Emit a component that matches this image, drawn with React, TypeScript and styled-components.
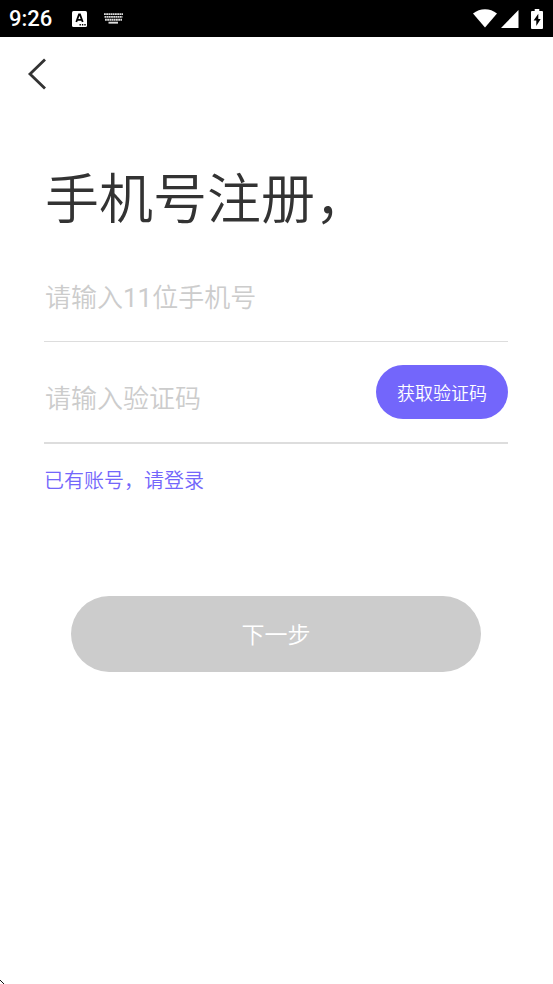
import React from 'react';
import styled, { createGlobalStyle } from 'styled-components';

const GlobalStyle = createGlobalStyle`
  * { box-sizing: border-box; }
  body {
    margin: 0;
    background: #fff;
    font-family: Roboto, "Noto Sans CJK SC DemiLight", "Noto Sans CJK SC", sans-serif;
    font-weight: 400;
  }
`;

const Screen = styled.div`
  position: relative;
  display: flex;
  flex-direction: column;
  min-height: 100vh;
  background: #fff;
`;

const StatusBar = styled.div`
  display: flex;
  align-items: center;
  justify-content: space-between;
  height: 37px;
  padding: 0 10px 0 9px;
  background: #000;
  color: #fff;
`;

const StatusGroup = styled.div<{ $gap: number }>`
  display: flex;
  align-items: center;
  gap: ${({ $gap }) => $gap}px;

  svg { display: block; }
`;

const Clock = styled.time`
  margin-right: 4px;
  font-size: 22px;
  font-weight: 500;
  line-height: 37px;
`;

const NavBar = styled.header`
  display: flex;
  align-items: center;
  height: 74px;
  padding: 0 20px;
`;

const BackButton = styled.button`
  display: flex;
  padding: 4px;
  border: 0;
  background: none;
  cursor: pointer;
`;

const Content = styled.main`
  display: flex;
  flex-direction: column;
  padding: 50px 45px 0 44px;
`;

const Title = styled.h1`
  margin: 0 0 16px;
  padding-left: 1px;
  font-size: 54px;
  font-weight: 400;
  line-height: 80px;
  color: #333;
`;

const Form = styled.form`
  display: flex;
  flex-direction: column;
`;

const Field = styled.div<{ $line: number }>`
  display: flex;
  align-items: center;
  gap: 16px;
  height: ${({ $line }) => ($line === 1 ? 85 : 102)}px;
  border-bottom: ${({ $line }) => $line}px solid #ddd;
`;

const TextInput = styled.input<{ $shift: number }>`
  flex: 1;
  min-width: 0;
  height: 48px;
  margin-top: ${({ $shift }) => $shift}px;
  padding: 0 0 0 1px;
  border: 0;
  outline: 0;
  background: none;
  font: inherit;
  font-size: 26px;
  color: #333;

  &::placeholder {
    color: #ccc;
    opacity: 1;
  }
`;

const CodeButton = styled.button`
  height: 54px;
  padding: 0 21px;
  border: 0;
  border-radius: 27px;
  background: #7366fb;
  color: #fff;
  font: inherit;
  font-size: 18px;
  white-space: nowrap;
  cursor: pointer;
`;

const LoginLink = styled.a`
  align-self: flex-start;
  margin-top: 21px;
  font-size: 20px;
  line-height: 32px;
  color: #7366fb;
  text-decoration: none;
`;

const NextButton = styled.button`
  height: 76px;
  margin: 99px 27px 0;
  padding: 0 0 2px;
  border: 0;
  border-radius: 38px;
  background: #ccc;
  color: #fff;
  font: inherit;
  font-size: 23px;
`;

const CornerMark = styled.svg`
  position: absolute;
  left: 0;
  bottom: 0;
`;

const LanguageIcon = () => (
  <svg width="16" height="16" viewBox="0 0 16 16" aria-hidden="true">
    <rect x="0" y="0" width="15" height="16" rx="1.5" fill="#fff" />
    <path d="M4.3 11 7 3.5h1L10.7 11M5.3 8.8h4.4" fill="none" stroke="#000" strokeWidth="1.8" />
    <path d="M7.5 13h1.4v1.4H7.5zM9.9 13h1.4v1.4H9.9zM12.3 13h1.4v1.4h-1.4z" fill="#000" />
  </svg>
);

const KeyboardIcon = () => (
  <svg width="19" height="11" viewBox="0 0 19 11" aria-hidden="true">
    <g fill="none" stroke="#ddd" strokeWidth="1.9">
      <path d="M0 1.1h19" strokeDasharray="1.8 .4" />
      <path d="M.5 3.9h18" strokeDasharray="1.8 .4" />
      <path d="M1 6.7h17" strokeDasharray="1.8 .4" />
      <path d="M4.5 9.7h9.5" />
    </g>
  </svg>
);

const WifiIcon = () => (
  <svg width="24" height="19" viewBox="0 0 24 19" aria-hidden="true">
    <path d="M0 4.5C7-1.2 17-1.2 24 4.5L12 18.5Z" fill="#fff" />
  </svg>
);

const SignalIcon = () => (
  <svg width="18" height="18" viewBox="0 0 18 18" aria-hidden="true">
    <path d="M17.5 0v18H0Z" fill="#fff" />
  </svg>
);

const BatteryIcon = () => (
  <svg width="12" height="20" viewBox="0 0 12 20" aria-hidden="true">
    <path d="M3.7 0h4.6v2H11q1 0 1 1v16q0 1-1 1H1q-1 0-1-1V3q0-1 1-1h2.7Z" fill="#fff" />
    <path d="M7.3 4.8 2.6 11.6H5.3V17L9.7 10H7.3Z" fill="#000" />
  </svg>
);

export default function App() {
  return (
    <Screen>
      <GlobalStyle />
      <StatusBar>
        <StatusGroup $gap={16}>
          <Clock>9:26</Clock>
          <LanguageIcon />
          <KeyboardIcon />
        </StatusGroup>
        <StatusGroup $gap={12}>
          <StatusGroup $gap={4}>
            <WifiIcon />
            <SignalIcon />
          </StatusGroup>
          <BatteryIcon />
        </StatusGroup>
      </StatusBar>
      <NavBar>
        <BackButton type="button" aria-label="返回">
          <svg width="24" height="32" viewBox="0 0 24 32" fill="none" stroke="#333" strokeWidth="2.8" aria-hidden="true">
            <path d="M21 1.5 6 16l15 14.5" />
          </svg>
        </BackButton>
      </NavBar>
      <Content>
        <Title>手机号注册，</Title>
        <Form onSubmit={(event: React.FormEvent) => event.preventDefault()}>
          <Field $line={1}>
            <TextInput $shift={-2} type="tel" aria-label="手机号" placeholder="请输入11位手机号" />
          </Field>
          <Field $line={2}>
            <TextInput $shift={14} type="text" inputMode="numeric" aria-label="验证码" placeholder="请输入验证码" />
            <CodeButton type="button">获取验证码</CodeButton>
          </Field>
          <LoginLink href="#login">已有账号，请登录</LoginLink>
          <NextButton type="submit">下一步</NextButton>
        </Form>
      </Content>
      <CornerMark width="4" height="4" viewBox="0 0 4 4" aria-hidden="true">
        <path d="M0 0h1v1H0zM1 1h1v1H1zM2 2h1v1H2zM3 3h1v1H3z" fill="#111" />
      </CornerMark>
    </Screen>
  );
}
